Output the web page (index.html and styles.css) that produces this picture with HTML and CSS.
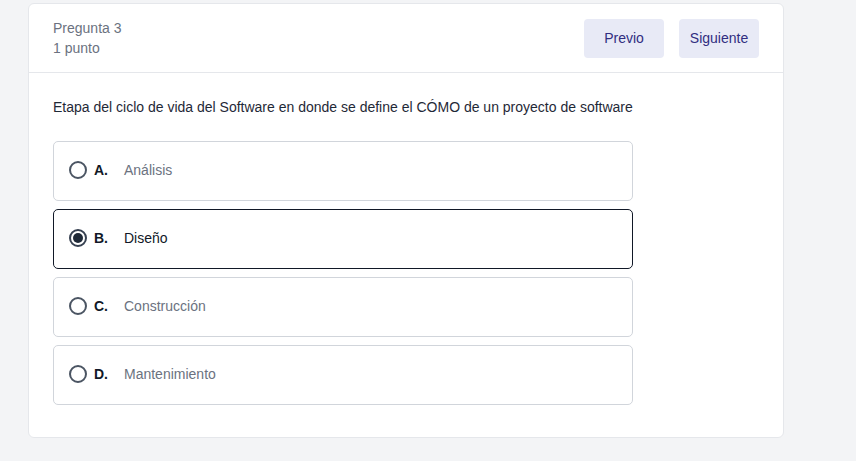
FILE: index.html
```html
<!DOCTYPE html>
<html lang="es">
<head>
<meta charset="utf-8">
<title>Pregunta 3</title>
<link rel="stylesheet" href="styles.css">
</head>
<body>
<div class="card">
  <div class="card-header">
    <div class="meta">
      <div class="meta-title">Pregunta 3</div>
      <div class="meta-points">1 punto</div>
    </div>
    <div class="nav">
      <button class="btn">Previo</button>
      <button class="btn">Siguiente</button>
    </div>
  </div>
  <div class="card-body">
    <p class="question">Etapa del ciclo de vida del Software en donde se define el CÓMO de un proyecto de software</p>
    <div class="options">
      <label class="option">
        <span class="radio"></span>
        <span class="letter">A.</span>
        <span class="label">Análisis</span>
      </label>
      <label class="option selected">
        <span class="radio"></span>
        <span class="letter">B.</span>
        <span class="label">Diseño</span>
      </label>
      <label class="option">
        <span class="radio"></span>
        <span class="letter">C.</span>
        <span class="label">Construcción</span>
      </label>
      <label class="option">
        <span class="radio"></span>
        <span class="letter">D.</span>
        <span class="label">Mantenimiento</span>
      </label>
    </div>
  </div>
</div>
</body>
</html>
```

FILE: styles.css
```css
* { box-sizing: border-box; }
html, body { margin: 0; }
body {
  background: #f3f4f6;
  font-family: "Liberation Sans", Arial, sans-serif;
  font-size: 14px;
  line-height: 20px;
  color: #1f2937;
  padding: 3px 0 0 28px;
}
.card {
  width: 756px;
  height: 435px;
  background: #fff;
  border: 1px solid #e5e7eb;
  border-radius: 6px;
}
.card-header {
  display: flex;
  justify-content: space-between;
  align-items: center;
  padding: 14px 24px 14px 24px;
  border-bottom: 1px solid #e5e7eb;
}
.meta { color: #6b7280; }
.nav { display: flex; gap: 15px; }
.btn {
  width: 80px;
  height: 39px;
  border: none;
  border-radius: 4px;
  background: #e8eaf6;
  color: #312e81;
  font-family: inherit;
  font-size: 14px;
  padding: 0;
}
.card-body { padding: 24px 24px 0 24px; }
.question { margin: 0 0 24px 0; color: #1f2937; }
.options { display: flex; flex-direction: column; gap: 8px; width: 580px; }
.option {
  display: flex;
  align-items: center;
  height: 60px;
  padding: 0 15px 2px 15px;
  border: 1px solid #d1d5db;
  border-radius: 5px;
}
.option.selected { border-color: #111827; }
.radio {
  width: 18px;
  height: 18px;
  border: 2px solid #4b5563;
  border-radius: 50%;
  margin-right: 7px;
  flex: none;
  display: flex;
  align-items: center;
  justify-content: center;
}
.option.selected .radio { border-color: #374151; }
.option.selected .radio::after {
  content: "";
  width: 10px;
  height: 10px;
  border-radius: 50%;
  background: #1f2937;
}
.letter { width: 30px; font-weight: bold; color: #111827; }
.label { color: #6b7280; }
.option.selected .label { color: #111827; }
```
